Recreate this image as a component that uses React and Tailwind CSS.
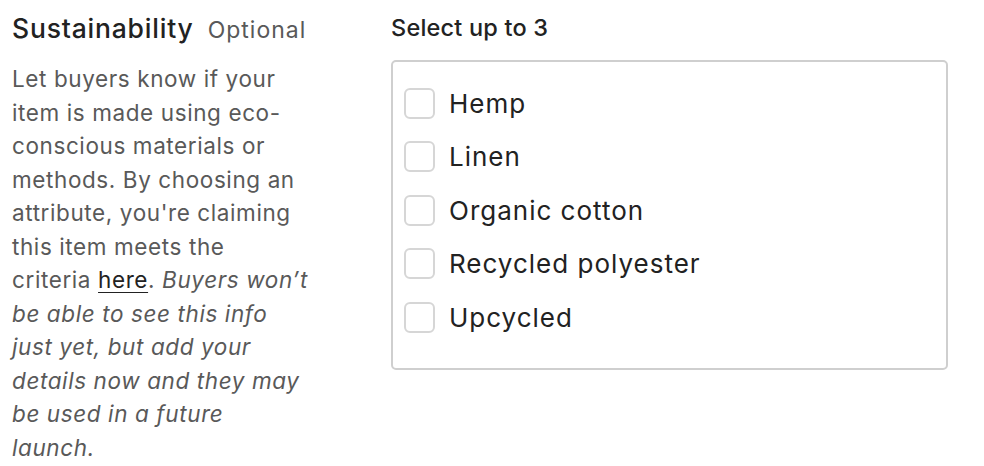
const options = ['Hemp', 'Linen', 'Organic cotton', 'Recycled polyester', 'Upcycled'];

export default function App() {
  return (
    <div className="flex bg-white w-[984px] h-[466px] overflow-hidden font-['Inter',sans-serif]">
      {/* left column */}
      <div className="w-[340px] pl-3 pt-[12px] shrink-0 whitespace-nowrap">
        <div className="flex items-baseline gap-[14px] leading-[33px]">
          <h2 className="text-[26.5px] font-medium text-[#222] tracking-[0.8px]">Sustainability</h2>
          <span className="text-[23px] text-[#595959] tracking-[1px]">Optional</span>
        </div>
        <p className="mt-[15px] text-[22.5px] leading-[33.5px] text-[#595959] tracking-[0.6px]">
          Let buyers know if your<br />
          item is made using eco-<br />
          conscious materials or<br />
          methods. By choosing an<br />
          attribute, you're claiming<br />
          this item meets the<br />
          criteria <a className="text-[#222] underline underline-offset-4 decoration-1">here</a>.{' '}
          <i>Buyers won’t<br />
          be able to see this info<br />
          just yet, but add your<br />
          details now and they may<br />
          be used in a future<br />
          launch.</i>
        </p>
      </div>

      {/* right column */}
      <div className="pl-[51px] pt-[13px]">
        <div className="text-[23.5px] leading-[30px] font-medium text-[#222] tracking-[0.2px]">Select up to 3</div>
        <div className="mt-[17px] w-[557px] h-[310px] border-2 border-[#cfcfcf] rounded-[5px] pt-[25px] px-[11px]">
          {options.map((o) => (
            <label key={o} className="flex items-center gap-[14px] h-[32px] mb-[21.5px]">
              <span className="w-[31px] h-[31px] rounded-[6px] border-2 border-[#d6d6d6] bg-white shrink-0" />
              <span className="text-[26px] text-[#222] tracking-[1px]">{o}</span>
            </label>
          ))}
        </div>
      </div>
    </div>
  );
}
